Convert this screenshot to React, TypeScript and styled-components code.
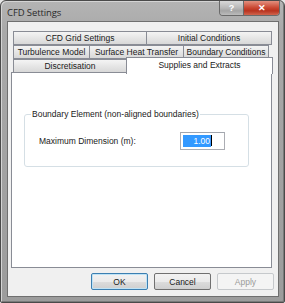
import styled, { createGlobalStyle } from "styled-components";

const GlobalStyle = createGlobalStyle`
  html, body {
    margin: 0;
    padding: 0;
    background: #e6e6e6;
  }
  * {
    box-sizing: border-box;
  }
`;

/* --- Window frame --- */
const Window = styled.div`
  width: 285px;
  height: 303px;
  display: flex;
  flex-direction: column;
  border: 1px solid #4a4a4a;
  border-radius: 6px 6px 2px 2px;
  background: linear-gradient(#b4b4b4, #a9a9a9 30px, #9c9c9c);
  box-shadow: inset 1px 1px 0 #d4d4d4, inset -1px -1px 0 #7a7a7a;
  font-family: "Liberation Sans", Arial, sans-serif;
  overflow: hidden;
`;
const TitleBar = styled.div`
  height: 20px;
  display: flex;
  align-items: flex-start;
  padding: 0 4px 0 6px;
`;
const Title = styled.span`
  margin-top: 5px;
  font-family: "Open Sans", "Liberation Sans", sans-serif;
  font-size: 9.5px;
  color: #2a2a2a;
  letter-spacing: -0.1px;
`;
const CaptionButtons = styled.div`
  margin-left: auto;
  display: flex;
  border: 1px solid #6a6a6a;
  border-top: none;
  border-radius: 0 0 4px 4px;
  overflow: hidden;
  height: 15px;
`;
const CaptionButton = styled.div<{ $close?: boolean }>`
  width: ${(p) => (p.$close ? 36 : 23)}px;
  height: 100%;
  display: flex;
  align-items: center;
  justify-content: center;
  font-size: 9px;
  font-weight: bold;
  color: #fff;
  background: ${(p) =>
    p.$close
      ? "linear-gradient(#e3907f, #c9452f 50%, #b8331f 70%, #d0644d)"
      : "linear-gradient(#d8d8d8, #b8b8b8 50%, #a4a4a4 70%, #bcbcbc)"};
  & + & {
    border-left: 1px solid #6a6a6a;
  }
`;

/* --- Client area --- */
const Client = styled.div`
  flex: 1;
  margin: 0 5px 5px 6px;
  background: #f0f0f0;
  border: 1px solid #6f6f6f;
  display: flex;
  flex-direction: column;
  padding: 9px 6px 0 3px;
`;
const TabStrip = styled.div`
  display: flex;
  flex-direction: column;
  margin-left: 2px;
`;
const TabRow = styled.div`
  display: flex;
  height: 14px;
`;
const Tab = styled.div<{ $w: number; $active?: boolean }>`
  width: ${(p) => p.$w}px;
  height: ${(p) => (p.$active ? 17 : 14)}px;
  margin-top: ${(p) => (p.$active ? -2 : 0)}px;
  margin-right: ${(p) => (p.$active ? -2 : 0)}px;
  position: relative;
  z-index: ${(p) => (p.$active ? 2 : 0)};
  display: flex;
  align-items: center;
  justify-content: center;
  font-size: 8.5px;
  color: #1a1a1a;
  white-space: nowrap;
  border: 1px solid #898c95;
  border-bottom: ${(p) => (p.$active ? "none" : "1px solid #898c95")};
  background: ${(p) =>
    p.$active ? "#fff" : "linear-gradient(#f4f4f4, #e6e6e6 50%, #d8d8d8)"};
  padding-bottom: ${(p) => (p.$active ? 3 : 0)}px;
  & + & {
    margin-left: -1px;
  }
`;
const Panel = styled.div`
  margin-top: -1px;
  height: 196px;
  background: #fff;
  border: 1px solid #898c95;
  padding: 36px 22px 0 12px;
`;
const Group = styled.fieldset`
  margin: 0;
  height: 58px;
  border: 1px solid #d5dfe5;
  border-radius: 3px;
  padding: 13px 0 0 14px;
`;
const Legend = styled.legend`
  font-size: 8.5px;
  color: #1a1a1a;
  padding: 0 1px;
  margin-left: -8px;
`;
const FieldRow = styled.div`
  display: flex;
  align-items: center;
  height: 17px;
`;
const FieldLabel = styled.span`
  font-size: 8.5px;
  color: #1a1a1a;
  width: 141px;
`;
const NumberBox = styled.div`
  width: 45px;
  height: 18px;
  border: 1px solid #abadb3;
  border-top-color: #a2a6ae;
  background: #fff;
  display: flex;
  align-items: center;
  padding-left: 2px;
`;
const Selected = styled.span`
  background: #3399ff;
  color: #fff;
  font-size: 8.5px;
  line-height: 12px;
  width: 28px;
  text-align: right;
  padding-right: 1px;
`;
const Caret = styled.span`
  width: 1px;
  height: 11px;
  background: #000;
`;

/* --- Buttons --- */
const ButtonRow = styled.div`
  display: flex;
  justify-content: flex-end;
  gap: 6px;
  margin-top: 5px;
  margin-right: -2px;
`;
const Button = styled.div<{ $default?: boolean; $disabled?: boolean }>`
  width: 57px;
  height: 17px;
  border-radius: 2px;
  display: flex;
  align-items: center;
  justify-content: center;
  font-size: 8.5px;
  color: ${(p) => (p.$disabled ? "#9a9a9a" : "#1a1a1a")};
  border: 1px solid
    ${(p) => (p.$default ? "#3c7fb1" : p.$disabled ? "#c6c9cc" : "#707070")};
  background: ${(p) =>
    p.$disabled
      ? "#f4f4f4"
      : "linear-gradient(#f2f2f2, #ebebeb 50%, #dddddd 50%, #cfcfcf)"};
  box-shadow: ${(p) => (p.$default ? "inset 0 0 0 1px #bfe3f6" : "none")};
`;

export default function App() {
  return (
    <>
      <GlobalStyle />
      <Window>
        <TitleBar>
          <Title>CFD Settings</Title>
          <CaptionButtons>
            <CaptionButton>?</CaptionButton>
            <CaptionButton $close>✕</CaptionButton>
          </CaptionButtons>
        </TitleBar>
        <Client>
          <TabStrip>
            <TabRow>
              <Tab $w={134}>CFD Grid Settings</Tab>
              <Tab $w={126}>Initial Conditions</Tab>
            </TabRow>
            <TabRow>
              <Tab $w={77}>Turbulence Model</Tab>
              <Tab $w={95}>Surface Heat Transfer</Tab>
              <Tab $w={86}>Boundary Conditions</Tab>
            </TabRow>
            <TabRow>
              <Tab $w={114}>Discretisation</Tab>
              <Tab $w={147} $active>
                Supplies and Extracts
              </Tab>
            </TabRow>
          </TabStrip>
          <Panel>
            <Group>
              <Legend>Boundary Element (non-aligned boundaries)</Legend>
              <FieldRow>
                <FieldLabel>Maximum Dimension (m):</FieldLabel>
                <NumberBox>
                  <Selected>1.00</Selected>
                  <Caret />
                </NumberBox>
              </FieldRow>
            </Group>
          </Panel>
          <ButtonRow>
            <Button $default>OK</Button>
            <Button>Cancel</Button>
            <Button $disabled>Apply</Button>
          </ButtonRow>
        </Client>
      </Window>
    </>
  );
}
